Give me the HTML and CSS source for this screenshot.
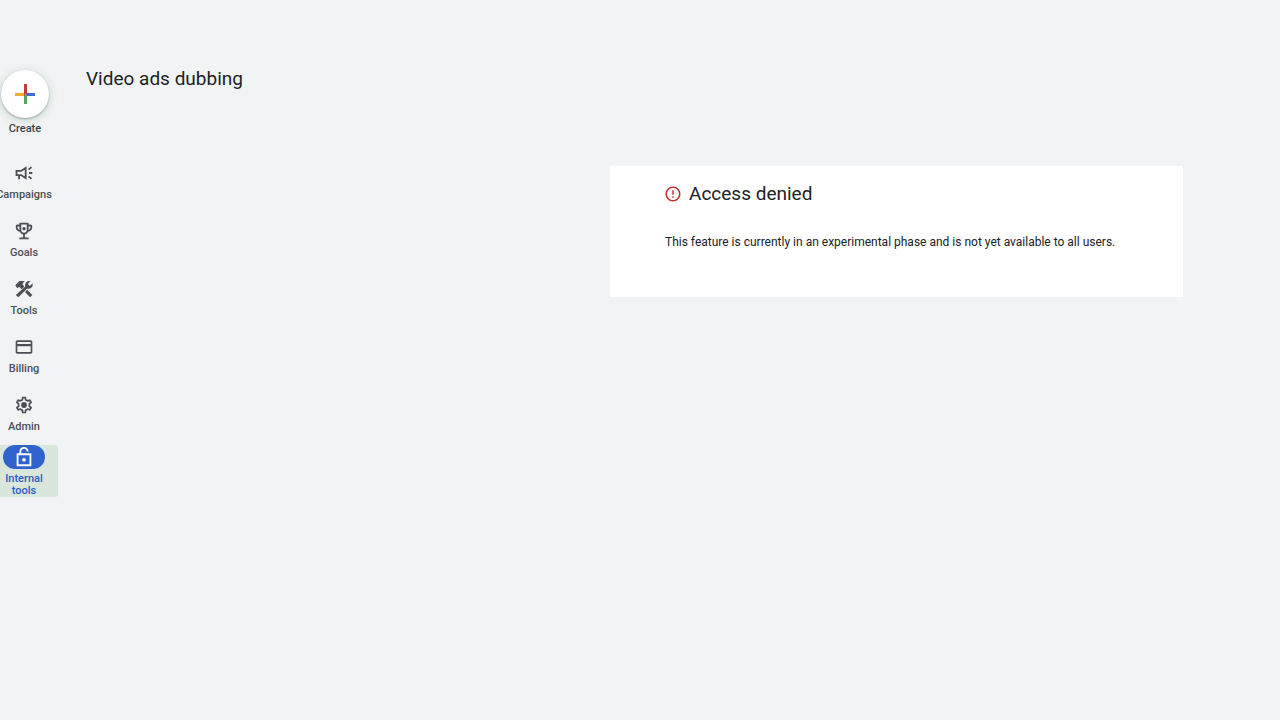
FILE: index.html
```html
<!DOCTYPE html>
<html lang="en">
<head>
<meta charset="utf-8">
<meta name="viewport" content="width=device-width, initial-scale=1">
<title>Video ads dubbing</title>
<link rel="stylesheet" href="styles.css">
</head>
<body>
<div class="app">
  <nav class="sidebar" aria-label="Main">
    <button class="create" type="button">
      <span class="create-disc">
        <svg viewBox="0 0 20 20" width="20" height="20" aria-hidden="true">
          <path fill="#efb02e" d="M0 9h9v3H0z"/>
          <path fill="#3f6fd1" d="M11 9h9v3h-9z"/>
          <path fill="#58a55c" d="M9 11h3v9H9z"/>
          <path fill="#c53a35" d="M9 0h3v9l-3 3z"/>
        </svg>
      </span>
      <span class="label">Create</span>
    </button>
    <div class="nav-list">
      <a class="nav-item" href="#">
        <span class="pill"><svg viewBox="0 0 24 24" width="20" height="20" aria-hidden="true"><g fill="none" stroke="currentColor" stroke-width="2.200"><path d="M3 9.500h5.500L14 6v12l-5.500-3.500H3zM6 14.500V19.500M17.500 8l3.500-3M18 12h4M17.500 16l3.500 3"/></g></svg></span>
        <span class="label">Campaigns</span>
      </a>
      <a class="nav-item" href="#">
        <span class="pill"><svg viewBox="0 0 24 24" width="22" height="22" aria-hidden="true"><path d="M19 5h-2V3H7v2H5c-1.100 0-2 .9-2 2v1c0 2.550 1.920 4.630 4.390 4.940A5.010 5.010 0 0 0 11 15.900V19H7v2h10v-2h-4v-3.100a5.010 5.010 0 0 0 3.610-2.960C19.080 12.630 21 10.550 21 8V7c0-1.100-.9-2-2-2zM5 8V7h2v3.820C5.840 10.400 5 9.300 5 8zm7 6c-1.650 0-3-1.350-3-3V5h6v6c0 1.650-1.350 3-3 3zm7-6c0 1.300-.84 2.400-2 2.820V7h2v1z"/><circle cx="12" cy="9.500" r="1.800"/></svg></span>
        <span class="label">Goals</span>
      </a>
      <a class="nav-item" href="#">
        <span class="pill"><svg viewBox="0 0 24 24" width="20" height="20" aria-hidden="true"><path d="M1.500 7.500L6.500 2.500H13L10.500 5v2l2 2-3.300 3.300-3-3L4 11z"/><path d="M22.300 5.200L19 8.500 16.500 6l3.300-3.300a5 5 0 0 0-6.300 6.400L2.300 19.200l2.800 2.800L15.900 11.400a5 5 0 0 0 6.400-6.200z"/><path d="M13.200 15.500l2.700-2.700 6.100 6.300-2.700 2.700z"/></svg></span>
        <span class="label">Tools</span>
      </a>
      <a class="nav-item" href="#">
        <span class="pill"><svg viewBox="0 0 24 24" width="20" height="20" aria-hidden="true"><path d="M20 4H4c-1.110 0-1.990.89-1.990 2L2 18c0 1.110.89 2 2 2h16c1.110 0 2-.89 2-2V6c0-1.110-.89-2-2-2zm0 14H4v-7h16v7zm0-9.500H4V6h16v2.500z"/></svg></span>
        <span class="label">Billing</span>
      </a>
      <a class="nav-item" href="#">
        <span class="pill"><svg viewBox="0 0 24 24" width="20" height="20" aria-hidden="true"><path d="M19.430 12.980c.04-.32.07-.64.07-.98 0-.34-.03-.66-.07-.98l2.110-1.650c.19-.15.24-.42.12-.64l-2-3.460a.5.5 0 0 0-.61-.22l-2.490 1c-.52-.4-1.080-.73-1.690-.98l-.38-2.650A.49.49 0 0 0 14 2h-4c-.25 0-.46.18-.49.42l-.38 2.650c-.61.25-1.170.59-1.690.98l-2.490-1a.5.5 0 0 0-.61.22l-2 3.460c-.13.22-.07.49.12.64l2.110 1.650c-.04.32-.07.65-.07.98s.03.66.07.98l-2.110 1.650c-.19.15-.24.42-.12.64l2 3.460c.12.22.39.29.61.22l2.490-1c.52.4 1.080.73 1.690.98l.38 2.650c.03.24.24.42.49.42h4c.25 0 .46-.18.49-.42l.38-2.650c.61-.25 1.170-.59 1.690-.98l2.490 1c.23.09.49 0 .61-.22l2-3.460a.5.5 0 0 0-.12-.64l-2.110-1.650zm-1.980-1.710c.04.31.05.52.05.73s-.02.43-.05.73l-.14 1.130.89.7 1.080.84-.7 1.210-1.270-.51-1.040-.42-.9.68c-.43.32-.84.56-1.250.73l-1.060.43-.16 1.130-.2 1.350h-1.400l-.19-1.350-.16-1.130-1.060-.43c-.43-.18-.83-.41-1.230-.71l-.91-.7-1.060.43-1.270.51-.7-1.210 1.080-.84.89-.7-.14-1.130c-.03-.31-.05-.54-.05-.74s.02-.43.05-.73l.14-1.130-.89-.7-1.080-.84.7-1.210 1.270.51 1.040.42.9-.68c.43-.32.84-.56 1.250-.73l1.060-.43.16-1.130.2-1.350h1.390l.19 1.350.16 1.130 1.060.43c.43.18.83.41 1.230.71l.91.7 1.060-.43 1.270-.51.7 1.210-1.070.85-.89.7.14 1.130z"/><circle cx="12" cy="12" r="3.500"/></svg></span>
        <span class="label">Admin</span>
      </a>
      <a class="nav-item selected" href="#" aria-current="page">
        <span class="pill"><svg viewBox="0 0 24 24" width="22" height="22" aria-hidden="true"><path d="M18 8H9V6c0-1.710 1.390-3.100 3.100-3.100S15 4.290 15 6h2c0-2.760-2.240-5-5-5S7 3.240 7 6v2H4v14h16V8h-2zm0 12H6V10h12v10zm-6-3c1.100 0 2-.9 2-2s-.9-2-2-2-2 .9-2 2 .9 2 2 2z"/></svg></span>
        <span class="label">Internal<br>tools</span>
      </a>
    </div>
  </nav>
  <main class="main">
    <h1 class="title">Video ads dubbing</h1>
    <section class="card">
      <h2 class="card-title">
        <svg viewBox="0 0 24 24" width="18" height="18" aria-hidden="true"><path d="M11 15h2v2h-2zm0-8h2v6h-2zm.99-5C6.470 2 2 6.480 2 12s4.470 10 9.990 10C17.520 22 22 17.520 22 12S17.520 2 11.990 2zM12 20c-4.420 0-8-3.580-8-8s3.580-8 8-8 8 3.580 8 8-3.580 8-8 8z"/></svg>
        Access denied
      </h2>
      <p class="card-text">This feature is currently in an experimental phase and is not yet available to all users.</p>
    </section>
  </main>
</div>
</body>
</html>
```
FILE: styles.css
```css
* {
  box-sizing: border-box;
}

body {
  margin: 0;
  background: #f1f3f4;
  color: #202124;
  font-family: Roboto, "Liberation Sans", sans-serif;
}

.app {
  display: flex;
  min-height: 100vh;
}

.sidebar {
  flex: none;
  width: 58px;
  padding-top: 70px;
}

.create {
  display: flex;
  flex-direction: column;
  align-items: center;
  gap: 5px;
  width: 50px;
  padding: 0;
  border: 0;
  background: none;
  color: #3c4043;
  font-family: inherit;
  cursor: pointer;
}

.create-disc {
  display: flex;
  align-items: center;
  justify-content: center;
  width: 48px;
  height: 48px;
  border-radius: 50%;
  background: #fff;
  box-shadow: 0 1px 2px rgba(60, 64, 67, 0.4), 0 2px 7px 2px rgba(70, 130, 85, 0.16);
}

.label {
  font-size: 11px;
  font-weight: 500;
  line-height: 12px;
  text-align: center;
}

.nav-list {
  display: flex;
  flex-direction: column;
  gap: 7px;
  margin-top: 20px;
}

.nav-item {
  display: flex;
  flex-direction: column;
  align-items: center;
  gap: 4px;
  min-height: 51px;
  padding: 6px 10px 0 0;
  color: #4b4f54;
  text-decoration: none;
}

.pill {
  display: flex;
  align-items: center;
  justify-content: center;
  width: 42px;
  height: 24px;
  border-radius: 12px;
}

.nav-item svg {
  fill: currentColor;
}

.selected {
  padding-top: 0;
  border-radius: 0 3px 3px 0;
  background: #d9e6dc;
  color: #2c5bc4;
}

.selected .pill {
  background: #2f62cd;
  color: #fff;
}

.main {
  flex: 1;
  min-width: 0;
  padding: 67px 97px 24px 28px;
}

.title,
.card-title {
  margin: 0;
  font-size: 19px;
  font-weight: 400;
  line-height: 24px;
}

.card {
  max-width: 573px;
  margin: 75px 0 0 auto;
  padding: 16px 54px 47px 55px;
  background: #fff;
}

.card-title {
  display: flex;
  align-items: center;
  gap: 7px;
}

.card-title svg {
  flex: none;
  margin-left: -1px;
  fill: #c5302f;
}

.card-text {
  margin: 28px 0 0;
  font-size: 12px;
  line-height: 16px;
}
```
